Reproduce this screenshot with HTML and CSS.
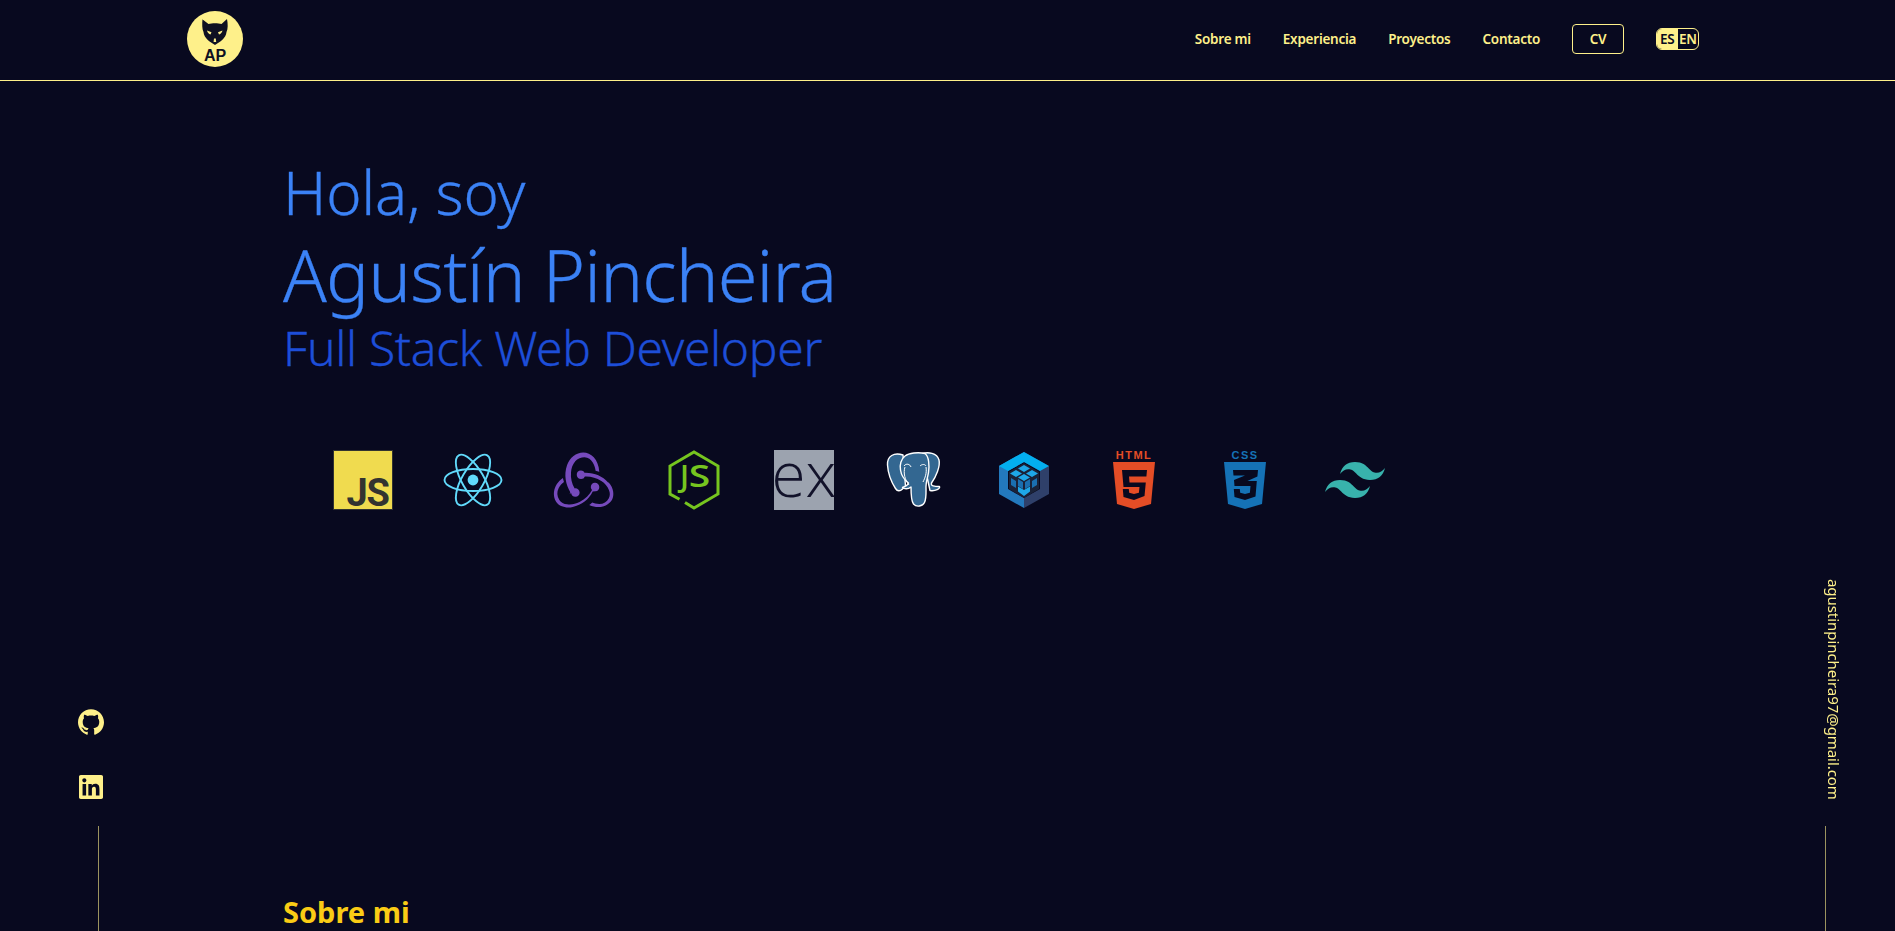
FILE: index.html
```html
<!DOCTYPE html>
<html lang="es">
<head>
    <meta charset="UTF-8">
    <meta name="viewport" content="width=device-width, initial-scale=1.0">
    <title>Agustín Pincheira</title>
    <link rel="stylesheet" href="styles.css">
</head>
<body>
    <header class="navbar">
        <a class="logo" href="#">
            <svg viewBox="0 0 56 56" width="56" height="56">
                <circle cx="28" cy="28" r="28" fill="#fef08a"/>
                <path d="M15 8l6.500 5c3.500-1 9.500-1 13 0L40 8c1 5 1 10-.5 13-.5 6-6.500 10-11.500 13-5-3-11-7-11.500-13-1.500-3-1.500-8-1-13z" fill="#0f1022"/>
                <path d="M20 19.500l4.500 1.800-1 2.200c-1.800-.4-3-2-3.500-4zM35.500 19.500L31 21.300l1 2.200c1.800-.4 3-2 3.500-4z" fill="#fef08a"/>
                <path d="M27 27.500h1.800l.4 3.500h-2.600z" fill="#fef08a"/>
                <text x="28" y="49.500" class="logo-text" text-anchor="middle">AP</text>
            </svg>
        </a>
        <nav class="nav-links">
            <a href="#">Sobre mi</a>
            <a href="#">Experiencia</a>
            <a href="#">Proyectos</a>
            <a href="#">Contacto</a>
            <a class="cv-btn" href="#">CV</a>
            <div class="lang-toggle">
                <span class="lang active">ES</span>
                <span class="lang">EN</span>
            </div>
        </nav>
    </header>

    <main class="content">
        <section class="hero">
            <h2 class="hello">Hola, soy</h2>
            <h1 class="name">Agustín Pincheira</h1>
            <h3 class="role">Full Stack Web Developer</h3>
            <div class="techs">
                <!-- javascript -->
                <svg viewBox="0 0 60 60" width="60" height="60">
                    <rect x=".5" y=".5" width="59" height="59" fill="#f0db4f" stroke="#323330"/>
                    <text x="56" y="55.500" class="tech-js" text-anchor="end">JS</text>
                </svg>
                <!-- react -->
                <svg viewBox="0 0 60 60" width="60" height="60">
                    <circle cx="30" cy="30" r="5.400" fill="#61dafb"/>
                    <g fill="none" stroke="#61dafb" stroke-width="1.900">
                        <ellipse cx="30" cy="30" rx="28.500" ry="11"/>
                        <ellipse cx="30" cy="30" rx="28.500" ry="11" transform="rotate(60 30 30)"/>
                        <ellipse cx="30" cy="30" rx="28.500" ry="11" transform="rotate(120 30 30)"/>
                    </g>
                </svg>
                <!-- redux -->
                <svg viewBox="-.4 0 24 24" width="60" height="60">
                    <path fill="#764abc" d="M16.634 16.504c.87-.075 1.543-.84 1.5-1.754-.047-.914-.796-1.648-1.709-1.648h-.061a1.71 1.71 0 00-1.648 1.769c.03.479.226.869.494 1.153-1.048 2.038-2.621 3.536-5.004 4.795-1.603.838-3.296 1.154-4.944.93-1.378-.195-2.456-.81-3.116-1.799-.988-1.499-1.078-3.116-.255-4.734.6-1.17 1.499-2.023 2.099-2.443a9.96 9.96 0 01-.42-1.543C-.868 14.408-.416 18.752.838 20.66c.93 1.42 2.83 2.301 4.944 2.301.57 0 1.14-.06 1.709-.21 3.655-.704 6.413-2.91 8.003-6.143zm5.004-3.504c-2.158-2.533-5.34-3.925-8.988-3.925h-.45c-.254-.51-.794-.84-1.394-.84h-.06A1.71 1.71 0 009.098 9.96c.03.913.81 1.648 1.71 1.648h.06a1.71 1.71 0 001.499-1.05h.51c2.16 0 4.207.63 6.055 1.859 1.42.93 2.429 2.128 3.029 3.586.51 1.17.48 2.323-.03 3.296-.78 1.499-2.098 2.308-3.835 2.308-1.11 0-2.189-.33-2.758-.6-.3.27-.87.72-1.26.99 1.2.54 2.428.84 3.627.84 2.729 0 4.767-1.5 5.547-3.027.84-1.65.78-4.498-1.378-6.832zM6.828 17.092c.03.914.81 1.648 1.71 1.648h.06a1.71 1.71 0 001.648-1.768c-.03-.914-.81-1.648-1.71-1.648h-.06c-.06 0-.15 0-.21.03-1.168-1.948-1.648-4.074-1.468-6.372.12-1.715.69-3.206 1.708-4.435.84-1.079 2.488-1.618 3.596-1.648 3.116-.06 4.434 3.836 4.525 5.403.39.09 1.05.3 1.499.45C17.816 3.566 14.7 1 11.704 1 8.888 1 6.28 3.037 5.24 6.034c-1.44 3.985-.48 7.851 1.289 10.878-.15.21-.24.51-.21.78z"/>
                </svg>
                <!-- node -->
                <svg viewBox="0 0 60 60" width="60" height="60">
                    <path d="M21 52.500l9 5.500 24-14V16L30 2 6 16v28l9.500 5.300" fill="none" stroke="#76c51f" stroke-width="3"/>
                    <text x="16" y="37" class="tech-node">J</text>
                    <text x="19" y="37" class="tech-node" transform="scale(1.300 1)">S</text>
                </svg>
                <!-- express -->
                <svg viewBox="0 0 60 60" width="60" height="60">
                    <rect width="60" height="60" fill="#9ca3af"/>
                    <text x="30" y="47" class="tech-ex" text-anchor="middle">ex</text>
                </svg>
                <!-- postgres -->
                <svg viewBox="0 0 60 60" width="60" height="60">
                    <g fill="#336791" stroke="#fff" stroke-width="1.400" stroke-linejoin="round">
                        <path d="M19 5C10 2 3 6 3.500 15c.5 8 4.500 18 8 23.500 2 3 4.500 3 7 .5l3-3z"/>
                        <path d="M38 3.500c6-1.500 15-1 17 6.500 1.500 6-3 17-7.500 23-1 3 3 3.500 8 3.500 1 2-4 5-9.500 4z"/>
                        <path d="M21 6c4-3 13-4 20-2.500 4 3 4.500 12 3.500 19-1 6-2.500 9-2.500 14 0 5 .5 12-1.500 16-2 4-8 5-11 1.500-2.500-3-2.500-9-2.500-17-3 2.500-7 2-8.500.5 2-1 5-1.500 6-4.500-4-3-7-6-8-13C15.500 15 17 9 21 6z"/>
                    </g>
                    <path d="M20 16c2-3 6-2 7 1M36 16c2-2 5-2 6 0" fill="none" stroke="#fff" stroke-width="1"/>
                    <path d="M21 17c-2 6 0 13 4 18M42 17c1 6-1 11-3 15" fill="none" stroke="#fff" stroke-width="1"/>
                </svg>
                <!-- sequelize -->
                <svg viewBox="0 0 60 60" width="60" height="60">
                    <path d="M30 2l25 14v28L30 58V48l16-9V21L30 12z" fill="#2f406a"/>
                    <path d="M30 2L5 16v28l25 14V48l-16-9V21l16-9z" fill="#2379bd"/>
                    <path d="M30 2l25 14-9 5-16-9-16 9-9-5z" fill="#03afef"/>
                    <path d="M30 13l15 9v17l-15 9-15-9V22z" fill="#1a2238"/>
                    <path d="M30 15l6 3.500-6 3.500-6-3.500zM22 20l6 3.500-6 3.500-6-3.500zM38 20l6 3.500-6 3.500-6-3.500zM30 24l6 3.500-6 3.500-6-3.500z" fill="#1ea7e8"/>
                    <path d="M24 29l5 3v7l-5-3zM36 29l-5 3v7l5-3zM17 28l5 3v7l-5-3zM43 28l-5 3v7l5-3z" fill="#1a6fb0"/>
                    <path d="M30 40l6-3.500v5L30 46l-6-4.500v-5z" fill="#1ea7e8"/>
                </svg>
                <!-- html -->
                <svg viewBox="0 0 60 60" width="60" height="60">
                    <text x="30" y="9" class="tech-label" fill="#e44d26" text-anchor="middle">HTML</text>
                    <path d="M9 12h42l-4 42-17 5-17-5z" fill="#e44d26"/>
                    <path d="M18 20h25l-.6 6.500H25l.5 6h16.300l-1.300 13.500L30 50l-10.500-3-.7-8h6l.4 3.800 4.800 1.300 4.900-1.300.6-5.800H19.500z" fill="#08091f"/>
                </svg>
                <!-- css -->
                <svg viewBox="0 0 60 60" width="60" height="60">
                    <text x="30" y="9" class="tech-label" fill="#1572b6" text-anchor="middle">CSS</text>
                    <path d="M9 12h42l-4 42-17 5-17-5z" fill="#1572b6"/>
                    <path d="M18 20h25l-.6 6.500-10 4.500h9.400l-1.300 15.500L30 50l-10.500-3-.7-8h6l.4 3.800 4.800 1.300 4.900-1.300.6-6.800H19.500l-.5-6 11-4.500H18.500z" fill="#08091f"/>
                </svg>
                <!-- tailwind -->
                <svg viewBox="0 0 24 24" width="60" height="60">
                    <path fill="#38b2ac" d="M12.001 4.800c-3.200 0-5.200 1.600-6 4.800 1.200-1.600 2.600-2.200 4.200-1.800.913.228 1.565.89 2.288 1.624C13.666 10.618 15.027 12 18.001 12c3.200 0 5.200-1.600 6-4.800-1.200 1.600-2.600 2.200-4.200 1.800-.913-.228-1.565-.89-2.288-1.624C16.337 6.182 14.976 4.800 12.001 4.800zm-6 7.200c-3.200 0-5.200 1.600-6 4.800 1.200-1.600 2.600-2.200 4.200-1.800.913.228 1.565.89 2.288 1.624 1.177 1.194 2.538 2.576 5.512 2.576 3.200 0 5.200-1.600 6-4.800-1.200 1.600-2.600 2.200-4.200 1.800-.913-.228-1.565-.89-2.288-1.624C10.337 13.382 8.976 12 6.001 12z"/>
                </svg>
            </div>
        </section>
        <section class="about">
            <h2 class="section-title">Sobre mi</h2>
        </section>
    </main>

    <aside class="side side-left">
        <a href="#">
            <svg viewBox="0 0 24 24" width="26" height="26">
                <path fill="#fef08a" d="M12 .297c-6.630 0-12 5.373-12 12 0 5.303 3.438 9.800 8.205 11.385.6.113.82-.258.82-.577 0-.285-.01-1.040-.015-2.040-3.338.724-4.042-1.610-4.042-1.610C4.422 18.070 3.633 17.700 3.633 17.700c-1.087-.744.084-.729.084-.729 1.205.084 1.838 1.236 1.838 1.236 1.070 1.835 2.809 1.305 3.495.998.108-.776.417-1.305.76-1.605-2.665-.3-5.466-1.332-5.466-5.930 0-1.310.465-2.380 1.235-3.220-.135-.303-.54-1.523.105-3.176 0 0 1.005-.322 3.300 1.230.96-.267 1.980-.399 3-.405 1.020.006 2.040.138 3 .405 2.280-1.552 3.285-1.230 3.285-1.230.645 1.653.24 2.873.12 3.176.765.84 1.230 1.910 1.230 3.220 0 4.610-2.805 5.625-5.475 5.920.42.36.81 1.096.81 2.220 0 1.606-.015 2.896-.03 3.286 0 .315.21.69.825.57C20.565 22.092 24 17.592 24 12.297c0-6.627-5.373-12-12-12"/>
            </svg>
        </a>
        <a href="#">
            <svg viewBox="0 0 24 24" width="24" height="24">
                <path fill="#fef08a" d="M20.447 20.452h-3.554v-5.569c0-1.328-.027-3.037-1.852-3.037-1.853 0-2.136 1.445-2.136 2.939v5.667H9.351V9h3.414v1.561h.046c.477-.9 1.637-1.850 3.370-1.850 3.601 0 4.267 2.370 4.267 5.455v6.286zM5.337 7.433c-1.144 0-2.063-.926-2.063-2.065 0-1.138.92-2.063 2.063-2.063 1.140 0 2.064.925 2.064 2.063 0 1.139-.925 2.065-2.064 2.065zm1.782 13.019H3.555V9h3.564v11.452zM22.225 0H1.771C.792 0 0 .774 0 1.729v20.542C0 23.227.792 24 1.771 24h20.451C23.200 24 24 23.227 24 22.271V1.729C24 .774 23.200 0 22.222 0h.003z"/>
            </svg>
        </a>
        <div class="side-line"></div>
    </aside>

    <aside class="side side-right">
        <a class="email" href="#">agustinpincheira97@gmail.com</a>
        <div class="side-line"></div>
    </aside>
</body>
</html>
```

FILE: styles.css
```css
html, body {
    height: 100%;
    overflow: hidden;
}
body {
    background-color: #08091f;
    margin: 0;
    font-family: "Noto Sans", sans-serif;
    color: #fef08a;
}
a {
    color: inherit;
    text-decoration: none;
}
h1, h2, h3 {
    margin: 0;
    font-weight: 300;
}
.navbar {
    display: flex;
    align-items: center;
    justify-content: space-between;
    height: 80px;
    padding: 0 196px 0 187px;
    border-bottom: 1px solid #fef08a;
}
.logo {
    display: block;
    height: 56px;
    margin-top: -2px;
}
.logo-text {
    font-family: "Liberation Sans", sans-serif;
    font-size: 16px;
    font-weight: 700;
    fill: #0f1022;
}
.nav-links {
    display: flex;
    align-items: center;
    gap: 32px;
    margin-bottom: 2px;
    font-size: 13.5px;
    font-weight: 600;
    letter-spacing: -.25px;
}
.cv-btn {
    display: flex;
    align-items: center;
    justify-content: center;
    width: 50px;
    height: 28px;
    border: 1px solid #fef08a;
    border-radius: 4px;
}
.lang-toggle {
    display: flex;
    height: 20px;
    border: 1px solid #fef08a;
    border-radius: 6px;
    overflow: hidden;
    font-size: 13.5px;
    letter-spacing: -.3px;
}
.lang {
    display: flex;
    align-items: center;
    justify-content: center;
    width: 20.500px;
}
.lang.active {
    background-color: #fef08a;
    color: #08091f;
}
.content {
    padding-left: 283px;
}
.hero {
    height: 811px;
    padding-top: 69px;
    box-sizing: border-box;
}
.hello {
    font-size: 60px;
    line-height: 84px;
    letter-spacing: -.27px;
    color: #3b82f6;
    -webkit-text-stroke: .3px;
}
.name {
    font-size: 72px;
    line-height: 80px;
    letter-spacing: -.85px;
    color: #3b82f6;
    -webkit-text-stroke: .3px;
}
.role {
    font-size: 48px;
    line-height: 68px;
    letter-spacing: -.35px;
    color: #1d4ed8;
    -webkit-text-stroke: .3px;
}
.techs {
    display: flex;
    gap: 50.200px;
    margin: 68px 0 0 50px;
}
.techs svg {
    flex: none;
    overflow: visible;
}
.tech-js {
    font-family: Roboto, sans-serif;
    font-size: 38px;
    font-weight: 700;
    letter-spacing: -1px;
    fill: #323330;
}
.tech-node {
    font-family: "Open Sans", sans-serif;
    font-size: 30px;
    font-weight: 600;
    fill: #76c51f;
}
.tech-ex {
    font-family: "Open Sans", sans-serif;
    font-size: 62px;
    font-weight: 300;
    fill: #12122a;
}
.tech-label {
    font-family: "Liberation Sans", sans-serif;
    font-size: 11px;
    font-weight: 700;
    letter-spacing: 1.500px;
}
.section-title {
    font-size: 29px;
    font-weight: 700;
    color: #facc15;
}
.side {
    position: fixed;
    bottom: 0;
    display: flex;
    flex-direction: column;
}
.side-left {
    left: 78px;
    width: 26px;
    gap: 40px;
    align-items: center;
}
.side-left a {
    display: block;
    height: 26px;
}
.side-line {
    width: 1px;
    height: 105px;
    background-color: #fef08a;
    opacity: .6;
}
.side-left .side-line {
    margin: -15px 0 0 14px;
}
.side-right {
    left: 1825px;
    gap: 26px;
}
.email {
    writing-mode: vertical-rl;
    margin-left: -1.500px;
    font-size: 15px;
    letter-spacing: -.06px;
}
```
